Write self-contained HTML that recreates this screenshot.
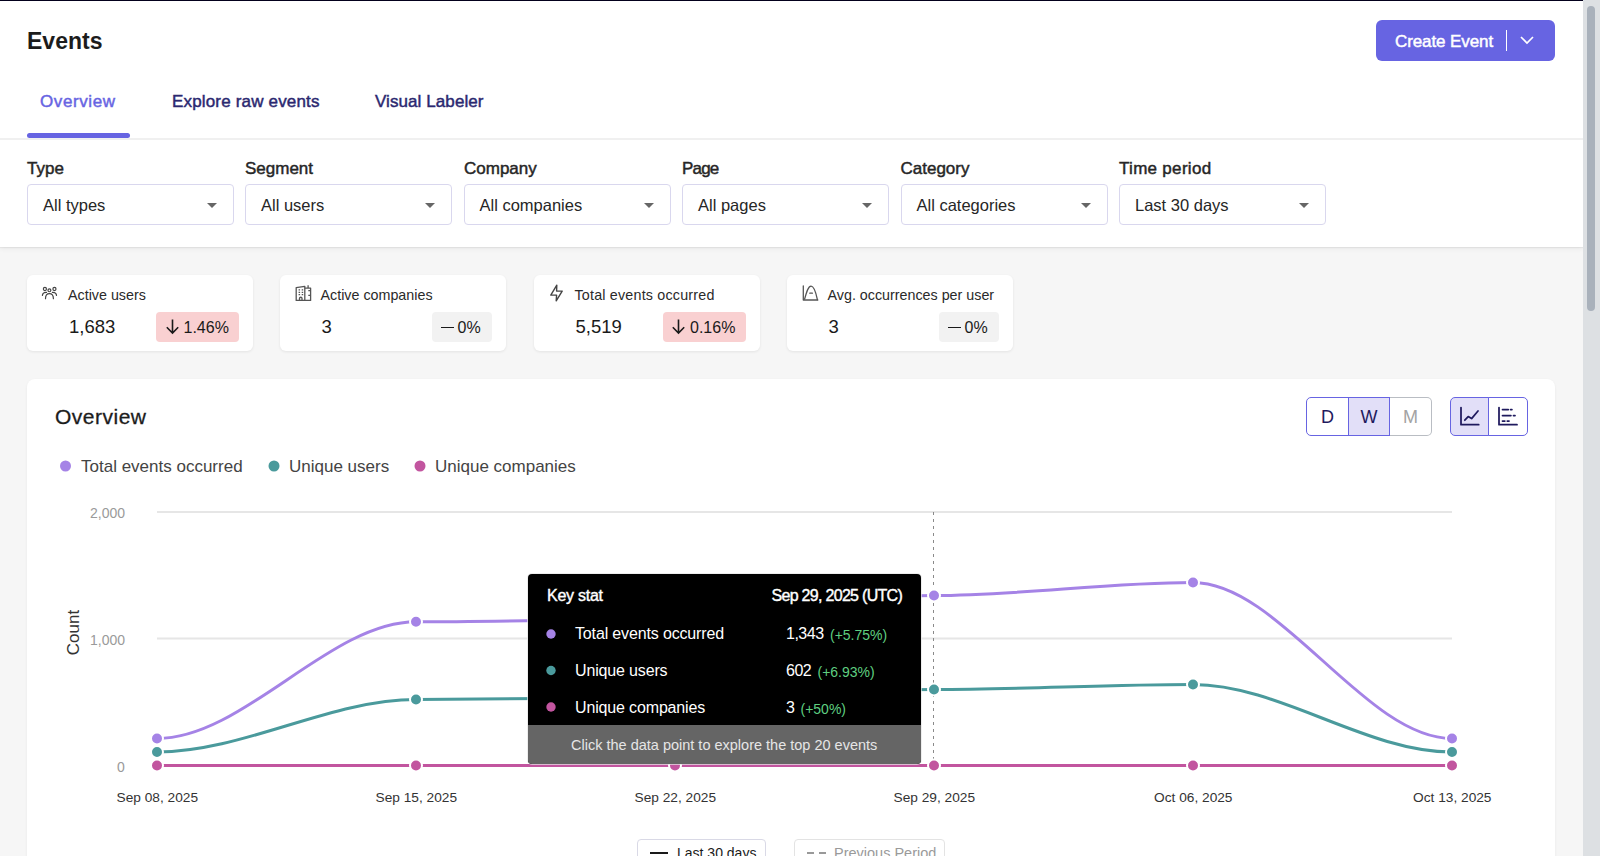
<!DOCTYPE html>
<html><head><meta charset="utf-8">
<style>
*{box-sizing:border-box;margin:0;padding:0}
html,body{width:1600px;height:856px;overflow:hidden;background:#f6f6f6;font-family:"Liberation Sans",sans-serif;color:#1f1f1f}
.t{position:absolute;white-space:nowrap;line-height:1}
svg{position:absolute;overflow:visible}
#topline{position:absolute;left:0;top:0;width:1600px;height:1px;background:#03001c}
#header{position:absolute;left:0;top:0;width:1583px;height:247px;background:#fff;box-shadow:0 1px 1px rgba(0,0,0,0.05),0 2px 5px rgba(0,0,0,0.05)}
#title{left:27px;top:30px;font-size:23px;font-weight:bold;color:#1c1c1c}
.btn{position:absolute;left:1376px;top:20px;width:179px;height:41px;background:#6764e2;border-radius:6px;color:#fff}
.tab{top:92.7px;font-size:17px;color:#2b2870;-webkit-text-stroke:0.45px currentColor}
#tabline{position:absolute;left:27px;top:133px;width:103px;height:4.5px;background:#6764e2;border-radius:3px}
#hsep{position:absolute;left:0;top:138px;width:1583px;height:2px;background:#f0f0f0}
.flabel{top:160px;font-size:17px;color:#262626;-webkit-text-stroke:0.45px #262626}
.sel{position:absolute;top:184px;width:207px;height:41px;border:1px solid #d9d7ee;border-radius:4px;background:#fff}
.sel span{position:absolute;left:15px;top:11.5px;font-size:16.5px;line-height:1;color:#262626;white-space:nowrap}
.sel i{position:absolute;right:16px;top:17.5px;width:0;height:0;border-left:5.2px solid transparent;border-right:5.2px solid transparent;border-top:5.8px solid #666}
.card{position:absolute;top:275px;width:226px;height:76px;background:#fff;border-radius:6px;box-shadow:0 1px 3px rgba(0,0,0,0.08)}
.card .lbl{left:41px;top:13px;font-size:14.3px;color:#2a2a2a}
.card .val{left:42px;top:43px;font-size:18.5px;color:#1a1a1a}
.badge{position:absolute;top:37px;height:29.5px;border-radius:4px;color:#1a1a1a}
.badge .t{font-size:16px;top:7.5px}
.badge.red{background:#f9d0d1;left:129px;width:83px}
.badge.gray{background:#f2f2f2;left:152px;width:60px}
#ov{position:absolute;left:27px;top:379px;width:1528px;height:600px;background:#fff;border-radius:8px;box-shadow:0 1px 3px rgba(0,0,0,0.06)}
#scroll{position:absolute;left:1583px;top:0;width:17px;height:856px;background:#dde0e3}
#thumb{position:absolute;left:1587px;top:6px;width:8px;height:305px;background:#a9b1bb;border-radius:4px}
.leg{top:458px;font-size:17px;color:#444}
.ax{font-size:14px;color:#9a9a9a}
.xl{top:790.5px;font-size:13.7px;color:#333;width:120px;text-align:center}
#tip{position:absolute;left:528px;top:574px;width:393px;height:189.5px;background:#000;border-radius:4px;overflow:hidden;color:#fff;box-shadow:0 0 0 1px rgba(230,230,230,0.7)}
#tipf{position:absolute;left:0;top:151px;width:393px;height:38.5px;background:#656565}
.kt{font-size:16px;top:14px;-webkit-text-stroke:0.4px #fff}
.seg{position:absolute;top:397px;height:39px;border:1.4px solid #6764e2}
.sl{font-size:18px;top:408px;color:#1f1a5e}
.lb{position:absolute;top:839px;height:30px;border:1px solid #d9d9e6;border-radius:4px;background:#fff}
</style></head>
<body>
<div id="header">
  <div id="title" class="t">Events</div>
  <div class="btn">
    <div class="t" style="left:19px;top:13px;font-size:17px;color:#fff;letter-spacing:-0.1px;-webkit-text-stroke:0.45px #fff">Create Event</div>
    <div style="position:absolute;left:129.5px;top:10px;width:1.6px;height:21px;background:#fff"></div>
    <svg style="left:144px;top:16px" width="14" height="8" viewBox="0 0 14 8"><path d="M1 1 L7 7 L13 1" fill="none" stroke="#fff" stroke-width="1.7"/></svg>
  </div>
  <div class="tab t" style="left:40px;color:#6764e2;letter-spacing:0.6px">Overview</div>
  <div class="tab t" style="left:172px;letter-spacing:0.17px">Explore raw events</div>
  <div class="tab t" style="left:375px;letter-spacing:0.08px">Visual Labeler</div>
  <div id="hsep"></div>
  <div id="tabline"></div>
  <div class="flabel t" style="left:27px">Type</div>
  <div class="flabel t" style="left:245px">Segment</div>
  <div class="flabel t" style="left:464px">Company</div>
  <div class="flabel t" style="left:682px;letter-spacing:-0.8px">Page</div>
  <div class="flabel t" style="left:900.5px">Category</div>
  <div class="flabel t" style="left:1119px;letter-spacing:0.3px">Time period</div>
  <div class="sel" style="left:27px"><span>All types</span><i></i></div>
  <div class="sel" style="left:245px"><span>All users</span><i></i></div>
  <div class="sel" style="left:463.5px"><span>All companies</span><i></i></div>
  <div class="sel" style="left:682px"><span>All pages</span><i></i></div>
  <div class="sel" style="left:900.5px"><span>All categories</span><i></i></div>
  <div class="sel" style="left:1119px"><span>Last 30 days</span><i></i></div>
</div>
<div id="topline"></div>

<!-- stat cards -->
<div class="card" style="left:27px">
  <svg style="left:0;top:0" width="40" height="40"><g fill="none" stroke="#444" stroke-width="1.2" stroke-linecap="round"><circle cx="17.9" cy="14" r="1.55"/><circle cx="22.4" cy="15.3" r="1.45"/><circle cx="27.45" cy="14" r="1.55"/><path d="M15.4 20.4 C15.6 18.3 17 17.3 19.5 17.4"/><path d="M29.5 20.4 C29.3 18.3 27.9 17.3 25.4 17.4"/><path d="M18.5 23.7 C18.5 20.2 20.2 18.7 22.4 18.7 C24.6 18.7 26.4 20.2 26.4 23.7"/></g></svg>
  <div class="lbl t">Active users</div><div class="val t">1,683</div>
  <div class="badge red"><svg style="left:9.5px;top:7px" width="14" height="16"><path d="M6.5 0.5 V14 M0.8 8.3 L6.5 14 L12.2 8.3" fill="none" stroke="#1a1a1a" stroke-width="1.6"/></svg><div class="t" style="left:27.5px">1.46%</div></div>
</div>
<div class="card" style="left:279.5px">
  <svg style="left:0;top:0" width="40" height="40"><g fill="none" stroke="#555" stroke-width="1.3" stroke-linejoin="round"><path d="M16.2 25.4 V12.6 L24.8 11.4 V25.4 Z"/><path d="M24.8 13.1 H30.6 V25.4 H24.8"/><path d="M28.1 13.1 V10.2"/><path d="M19.5 25.4 V23.2 C19.5 21.9 22 21.9 22 23.2 V25.4"/></g><g stroke="#555" stroke-width="1.2"><path d="M18.6 14.9 H20.1 M21.7 14.9 H23.2 M18.6 17.3 H20.1 M21.7 17.3 H23.2 M18.6 19.6 H20.1 M21.7 19.6 H23.2 M28.3 15.6 H30 M28.3 20.4 H30"/></g></svg>
  <div class="lbl t">Active companies</div><div class="val t">3</div>
  <div class="badge gray"><div style="position:absolute;left:9.5px;top:14.6px;width:13px;height:1.4px;background:#1a1a1a"></div><div class="t" style="left:26px">0%</div></div>
</div>
<div class="card" style="left:533.5px">
  <svg style="left:0;top:0" width="40" height="40"><path d="M22.8 10.1 L16.8 20.1 H22.6 L22.2 25.8 L28.2 16.1 H22.6 Z" fill="none" stroke="#444" stroke-width="1.4" stroke-linejoin="round"/></svg>
  <div class="lbl t" style="letter-spacing:0.2px">Total events occurred</div><div class="val t">5,519</div>
  <div class="badge red"><svg style="left:9.5px;top:7px" width="14" height="16"><path d="M6.5 0.5 V14 M0.8 8.3 L6.5 14 L12.2 8.3" fill="none" stroke="#1a1a1a" stroke-width="1.6"/></svg><div class="t" style="left:27.5px">0.16%</div></div>
</div>
<div class="card" style="left:786.5px">
  <svg style="left:0;top:0" width="40" height="40"><g fill="none" stroke="#555" stroke-width="1.3" stroke-linecap="round" stroke-linejoin="round"><path d="M16.3 11 V25 H30.8"/><path d="M17.6 24.2 C19.5 17 21.2 11.1 24.1 11.1 C27 11.1 28.8 17 30.4 24.6"/><path d="M22.8 18.2 H25.4"/></g></svg>
  <div class="lbl t">Avg. occurrences per user</div><div class="val t">3</div>
  <div class="badge gray"><div style="position:absolute;left:9.5px;top:14.6px;width:13px;height:1.4px;background:#1a1a1a"></div><div class="t" style="left:26px">0%</div></div>
</div>

<div id="ov"></div>
<div class="t" style="left:55px;top:406px;font-size:21px;color:#1c1c1c;letter-spacing:0.5px;-webkit-text-stroke:0.3px #1c1c1c">Overview</div>

<div class="seg" style="left:1306px;width:43px;border-radius:5px 0 0 5px"></div>
<div class="seg" style="left:1389px;width:43px;border-radius:0 5px 5px 0;border-color:#b9bdc3;border-left:none"></div>
<div class="seg" style="left:1347.6px;width:42.6px;background:#e2dff8"></div>
<div class="t sl" style="left:1321px">D</div>
<div class="t sl" style="left:1360.5px">W</div>
<div class="t sl" style="left:1403px;color:#a3a3a3">M</div>
<div class="seg" style="left:1450px;width:39px;border-radius:5px 0 0 5px;background:#e2dff8"></div>
<div class="seg" style="left:1487.6px;width:40px;border-radius:0 5px 5px 0"></div>
<svg style="left:0;top:0" width="1" height="1"><g fill="none" stroke="#1f1a5e" stroke-width="1.75" stroke-linecap="round" stroke-linejoin="round"><path d="M1461 407.5 V424.7 H1478.7"/><path d="M1464.8 420.2 L1468.2 416.6 L1471.6 418.6 L1478 411"/><path d="M1499 407.5 V424.7 H1517"/><path d="M1502.5 409.6 H1508.3 M1510.6 409.6 H1511.9 M1502.5 415.5 H1510.9 M1513.5 415.5 H1515 M1502.5 421.1 H1504.8 M1507.3 421.1 H1509"/></g></svg>

<div class="leg t" style="left:81px">Total events occurred</div>
<div class="leg t" style="left:289px">Unique users</div>
<div class="leg t" style="left:435px">Unique companies</div>

<svg style="left:0;top:0" width="1600" height="856" viewBox="0 0 1600 856">
  <circle cx="65.5" cy="466" r="5.5" fill="#a583e6"/>
  <circle cx="274" cy="466" r="5.5" fill="#4a9a9c"/>
  <circle cx="420" cy="466" r="5.5" fill="#c2559f"/>
  <line x1="157" y1="512" x2="1452" y2="512" stroke="#e6e6e6" stroke-width="2"/>
  <line x1="157" y1="638.5" x2="1452" y2="638.5" stroke="#e6e6e6" stroke-width="2"/>
  <line x1="933.5" y1="512" x2="933.5" y2="765" stroke="#8a8a8a" stroke-width="1" stroke-dasharray="3,4"/>
  <path d="M157,738.5 C243.333,738.5 329.667,621.8 416,621.8 C502.333,621.8 588.667,619 675,619 C761.333,619 847.667,595.5 934,595.5 C1020.33,595.5 1106.67,582.5 1193,582.5 C1279.33,582.5 1365.67,738.5 1452,738.5" fill="none" stroke="#a583e6" stroke-width="3"/>
  <path d="M157,752 C243.333,752 329.667,699.5 416,699.5 C502.333,699.5 588.667,697.5 675,697.5 C761.333,697.5 847.667,689.5 934,689.5 C1020.33,689.5 1106.67,684.5 1193,684.5 C1279.33,684.5 1365.67,752 1452,752" fill="none" stroke="#4a9a9c" stroke-width="3"/>
  <line x1="157" y1="765.5" x2="1452" y2="765.5" stroke="#c2559f" stroke-width="3"/>
  <g stroke="#fff" stroke-width="2">
    <circle cx="157" cy="738.5" r="6" fill="#a583e6"/><circle cx="416" cy="621.8" r="6" fill="#a583e6"/><circle cx="675" cy="619" r="6" fill="#a583e6"/><circle cx="934" cy="595.5" r="6" fill="#a583e6"/><circle cx="1193" cy="582.5" r="6" fill="#a583e6"/><circle cx="1452" cy="738.5" r="6" fill="#a583e6"/>
    <circle cx="157" cy="752" r="6" fill="#4a9a9c"/><circle cx="416" cy="699.5" r="6" fill="#4a9a9c"/><circle cx="675" cy="697.5" r="6" fill="#4a9a9c"/><circle cx="934" cy="689.5" r="6" fill="#4a9a9c"/><circle cx="1193" cy="684.5" r="6" fill="#4a9a9c"/><circle cx="1452" cy="752" r="6" fill="#4a9a9c"/>
    <circle cx="157" cy="765.5" r="6" fill="#c2559f"/><circle cx="416" cy="765.5" r="6" fill="#c2559f"/><circle cx="675" cy="765.5" r="6" fill="#c2559f"/><circle cx="934" cy="765.5" r="6" fill="#c2559f"/><circle cx="1193" cy="765.5" r="6" fill="#c2559f"/><circle cx="1452" cy="765.5" r="6" fill="#c2559f"/>
  </g>
  <text x="73.5" y="632.5" transform="rotate(-90 73.5 632.5)" text-anchor="middle" dominant-baseline="central" font-family="Liberation Sans" font-size="17" fill="#333">Count</text>
</svg>
<div class="ax t" style="left:90px;top:506px">2,000</div>
<div class="ax t" style="left:90px;top:633px">1,000</div>
<div class="ax t" style="left:117px;top:760px">0</div>
<div class="xl t" style="left:97.3px">Sep 08, 2025</div>
<div class="xl t" style="left:356.3px">Sep 15, 2025</div>
<div class="xl t" style="left:615.3px">Sep 22, 2025</div>
<div class="xl t" style="left:874.3px">Sep 29, 2025</div>
<div class="xl t" style="left:1133.3px">Oct 06, 2025</div>
<div class="xl t" style="left:1392.3px">Oct 13, 2025</div>

<div id="tip">
  <div class="t kt" style="left:19px;letter-spacing:-0.25px">Key stat</div>
  <div class="t kt" style="left:243.5px;letter-spacing:-0.7px">Sep 29, 2025 (UTC)</div>
  <svg style="left:0;top:0" width="393" height="151"><circle cx="23" cy="60" r="4.7" fill="#a583e6"/><circle cx="23" cy="96.5" r="4.7" fill="#4a9a9c"/><circle cx="23" cy="133" r="4.7" fill="#c2559f"/></svg>
  <div class="t" style="left:47px;top:52px;font-size:16px;letter-spacing:-0.15px">Total events occurred</div>
  <div class="t" style="left:258px;top:52px;font-size:16px;letter-spacing:-0.5px">1,343</div>
  <div class="t" style="left:302px;top:53.5px;font-size:14px;color:#5fcf80">(+5.75%)</div>
  <div class="t" style="left:47px;top:89px;font-size:16px;letter-spacing:-0.15px">Unique users</div>
  <div class="t" style="left:258px;top:89px;font-size:16px;letter-spacing:-0.5px">602</div>
  <div class="t" style="left:289.5px;top:90.5px;font-size:14px;color:#5fcf80">(+6.93%)</div>
  <div class="t" style="left:47px;top:126px;font-size:16px;letter-spacing:-0.15px">Unique companies</div>
  <div class="t" style="left:258px;top:126px;font-size:16px">3</div>
  <div class="t" style="left:272.5px;top:127.5px;font-size:14px;color:#5fcf80">(+50%)</div>
  <div id="tipf"><div class="t" style="left:43px;top:13px;font-size:14.5px;color:#e6e6e6">Click the data point to explore the top 20 events</div></div>
</div>

<div class="lb" style="left:637px;width:129px"><div style="position:absolute;left:12px;top:12px;width:18px;height:2px;background:#1a1a1a"></div><div class="t" style="left:39px;top:6px;font-size:14px;color:#1a1a1a">Last 30 days</div></div>
<div class="lb" style="left:794px;width:151px;border-color:#e3e3e3"><div style="position:absolute;left:12px;top:12px;width:7px;height:2px;background:#999"></div><div style="position:absolute;left:24px;top:12px;width:7px;height:2px;background:#999"></div><div class="t" style="left:39px;top:6px;font-size:14.5px;color:#9a9a9a">Previous Period</div></div>

<div id="scroll"></div><div id="thumb"></div>
</body></html>
